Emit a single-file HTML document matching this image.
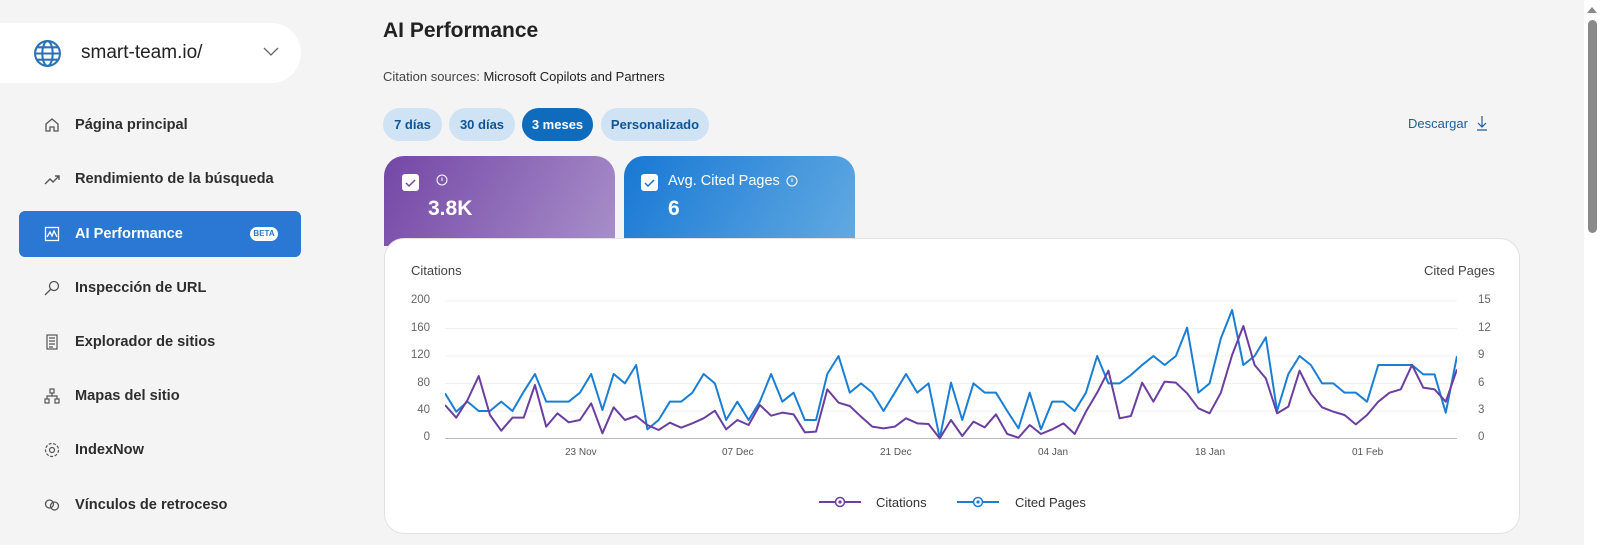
<!DOCTYPE html>
<html><head><meta charset="utf-8"><style>
*{margin:0;padding:0;box-sizing:border-box}
body{width:1600px;height:545px;background:#f4f4f4;font-family:"Liberation Sans",sans-serif;position:relative;overflow:hidden;color:#222}
.a{position:absolute}
.nav{position:absolute;left:0;width:301px;height:46px;display:flex;align-items:center;font-size:14.6px;font-weight:bold;color:#2e2e2e}
.nav svg{position:absolute;left:44px}
.nav span{position:absolute;left:75px}
.pill{position:absolute;top:108px;height:33px;border-radius:17px;background:#cfe3f4;color:#0f5596;font-size:13px;font-weight:bold;display:flex;align-items:center;justify-content:center}
.yl{position:absolute;font-size:11.5px;color:#666;width:24px;text-align:right}
.yr{position:absolute;font-size:11.5px;color:#666;left:1478px}
.xl{position:absolute;top:447px;font-size:10px;color:#555}
</style></head><body>
<div class="a" style="left:0;top:23px;width:301px;height:60px;background:#fff;border-radius:0 30px 30px 0"></div>
<svg class="a" style="left:33px;top:39px" width="29" height="29" viewBox="0 0 28 28" fill="none" stroke="#2a72b8" stroke-width="2"><circle cx="14" cy="14" r="12"/><ellipse cx="14" cy="14" rx="5" ry="12"/><path d="M2 14h24M4 8h20M4 20h20"/></svg>
<div class="a" style="left:81px;top:42px;font-size:19px;color:#222">smart-team.io/</div>
<svg class="a" style="left:263px;top:47px" width="16" height="10" viewBox="0 0 16 10" fill="none" stroke="#666" stroke-width="1.3"><path d="M1 1l7 7 7-7"/></svg>

<div class="nav" style="top:102px"><svg width="16" height="16" viewBox="0 0 16 16" fill="none" stroke="#555" stroke-width="1.3"><path d="M2 7l6-5 6 5v7H10v-4H6v4H2z"/></svg><span>Página principal</span></div>
<div class="nav" style="top:156px"><svg width="18" height="16" viewBox="0 0 18 16" fill="none" stroke="#555" stroke-width="1.4"><path d="M1 13l5-5 3 3 6-6M11 5h4v4"/></svg><span>Rendimiento de la búsqueda</span></div>
<div class="a" style="left:19px;top:211px;width:282px;height:46px;background:#2b78d4;border-radius:6px"></div>
<div class="nav" style="top:211px;color:#fff"><svg width="16" height="16" viewBox="0 0 16 16" fill="none" stroke="#fff" stroke-width="1.3"><rect x="1.5" y="1.5" width="13" height="13"/><path d="M3 11l3-5 2 4 2-5 3 6"/></svg><span>AI Performance</span></div>
<div class="a" style="left:250px;top:227px;width:28px;height:14px;background:#fff;border-radius:7px;font-size:8px;font-weight:bold;color:#2b78d4;text-align:center;line-height:14px">BETA</div>
<div class="nav" style="top:265px"><svg width="16" height="16" viewBox="0 0 16 16" fill="none" stroke="#555" stroke-width="1.3"><circle cx="10" cy="6" r="4.5"/><path d="M7 9l-6 6"/></svg><span>Inspección de URL</span></div>
<div class="nav" style="top:319px"><svg width="16" height="16" viewBox="0 0 16 16" fill="none" stroke="#555" stroke-width="1.2"><rect x="3" y="1" width="10" height="14"/><path d="M5 4h6M5 7h6M5 10h6M5 13h4"/></svg><span>Explorador de sitios</span></div>
<div class="nav" style="top:373px"><svg width="16" height="16" viewBox="0 0 16 16" fill="none" stroke="#555" stroke-width="1.2"><rect x="6" y="1" width="4" height="4"/><rect x="1" y="11" width="4" height="4"/><rect x="11" y="11" width="4" height="4"/><path d="M8 5v3M3 11V8h10v3"/></svg><span>Mapas del sitio</span></div>
<div class="nav" style="top:427px"><svg width="16" height="16" viewBox="0 0 16 16" fill="none" stroke="#555" stroke-width="1.2"><circle cx="8" cy="8" r="6.5" stroke-dasharray="3 1.5"/><circle cx="8" cy="8" r="2.5"/></svg><span>IndexNow</span></div>
<div class="nav" style="top:482px"><svg width="16" height="16" viewBox="0 0 16 16" fill="none" stroke="#555" stroke-width="1.3"><circle cx="5.5" cy="7" r="4"/><circle cx="10.5" cy="9" r="4"/></svg><span>Vínculos de retroceso</span></div>

<div class="a" style="left:383px;top:19px;font-size:21px;font-weight:bold;color:#222">AI Performance</div>
<div class="a" style="left:383px;top:69px;font-size:13px;color:#444">Citation sources: <span style="color:#222">Microsoft Copilots and Partners</span></div>
<div class="pill" style="left:383px;width:59px">7 días</div>
<div class="pill" style="left:449px;width:66px">30 días</div>
<div class="pill" style="left:522px;width:71px;background:#0f6cbd;color:#fff">3 meses</div>
<div class="pill" style="left:601px;width:108px">Personalizado</div>
<div class="a" style="left:1408px;top:116px;font-size:13px;color:#1c5e9e">Descargar</div>
<svg class="a" style="left:1476px;top:115px" width="12" height="16" viewBox="0 0 12 16" fill="none" stroke="#1c5e9e" stroke-width="1.2"><path d="M6 1v11M2 8l4 4 4-4M1 15h10"/></svg>

<div class="a" style="left:384px;top:156px;width:231px;height:90px;border-radius:20px 20px 0 0;background:linear-gradient(120deg,#7446a6,#a88fc9)"></div>
<div class="a" style="left:624px;top:156px;width:231px;height:90px;border-radius:20px 20px 0 0;background:linear-gradient(120deg,#1878d4,#62aae2)"></div>
<div class="a" style="left:402px;top:174px;width:17px;height:17px;background:#fff;border-radius:3px"><svg width="17" height="17"><path d="M4 9l3 3 6-6" fill="none" stroke="#6a4aa0" stroke-width="1.5"/></svg></div>
<div class="a" style="left:641px;top:174px;width:17px;height:17px;background:#fff;border-radius:3px"><svg width="17" height="17"><path d="M4 9l3 3 6-6" fill="none" stroke="#1a72c8" stroke-width="1.5"/></svg></div>
<svg class="a" style="left:436px;top:174px" width="12" height="12"><circle cx="6" cy="6" r="5" fill="none" stroke="#fff"/><path d="M6 3.5v3.5" stroke="#fff"/></svg>
<div class="a" style="left:428px;top:197px;font-size:21px;font-weight:bold;color:#fff">3.8K</div>
<div class="a" style="left:668px;top:173px;font-size:14.5px;color:#fff">Avg. Cited Pages</div>
<svg class="a" style="left:786px;top:175px" width="12" height="12"><circle cx="6" cy="6" r="5" fill="none" stroke="#fff"/><path d="M6 3.5v3.5" stroke="#fff"/></svg>
<div class="a" style="left:668px;top:197px;font-size:21px;font-weight:bold;color:#fff">6</div>

<div class="a" style="left:384px;top:238px;width:1136px;height:296px;background:#fff;border-radius:20px;border:1px solid #e2e2e2"></div>
<div class="a" style="left:411px;top:263px;font-size:13px;color:#444">Citations</div>
<div class="a" style="left:1424px;top:263px;font-size:13px;color:#444">Cited Pages</div>
<div class="yl" style="left:406px;top:294px">200</div>
<div class="yl" style="left:406px;top:322px">160</div>
<div class="yl" style="left:406px;top:349px">120</div>
<div class="yl" style="left:406px;top:377px">80</div>
<div class="yl" style="left:406px;top:404px">40</div>
<div class="yl" style="left:406px;top:431px">0</div>
<div class="yr" style="top:294px">15</div>
<div class="yr" style="top:322px">12</div>
<div class="yr" style="top:349px">9</div>
<div class="yr" style="top:377px">6</div>
<div class="yr" style="top:404px">3</div>
<div class="yr" style="top:431px">0</div>
<div class="xl" style="left:565px">23 Nov</div>
<div class="xl" style="left:722px">07 Dec</div>
<div class="xl" style="left:880px">21 Dec</div>
<div class="xl" style="left:1038px">04 Jan</div>
<div class="xl" style="left:1195px">18 Jan</div>
<div class="xl" style="left:1352px">01 Feb</div>
<svg class="a" style="left:445px;top:300px" width="1012" height="140"><g stroke="#f0f0f0"><path d="M0 1h1012M0 28.5h1012M0 56h1012M0 83.5h1012M0 111h1012"/></g><path d="M0 138.5h1012" stroke="#bbb"/></svg>
<svg class="a" style="left:445px;top:280px" width="1012" height="170" viewBox="0 0 90 510" preserveAspectRatio="none">
<polyline fill="none" stroke="#1a7fd4" stroke-width="2" vector-effect="non-scaling-stroke" stroke-linejoin="round" points="0,340 1,395 2,365 3,393 4,393 5,365 6,393 7,335 8,282 9,365 10,365 11,365 12,338 13,282 14,390 15,282 16,310 17,255 18,448 19,420 20,365 21,365 22,338 23,282 24,310 25,420 26,365 27,420 28,365 29,282 30,365 31,338 32,420 33,420 34,282 35,228 36,338 37,310 38,338 39,393 40,338 41,282 42,338 43,310 44,475 45,308 46,420 47,310 48,338 49,338 50,393 51,445 52,338 53,448 54,365 55,365 56,393 57,338 58,228 59,310 60,310 61,285 62,255 63,228 64,255 65,228 66,143 67,338 68,310 69,175 70,90 71,255 72,228 73,172 74,393 75,282 76,228 77,255 78,310 79,310 80,338 81,338 82,365 83,255 84,255 85,255 86,255 87,283 88,283 89,398 90,228"/>
<polyline fill="none" stroke="#6a3fa0" stroke-width="2" vector-effect="non-scaling-stroke" stroke-linejoin="round" points="0,375 1,413 2,360 3,288 4,405 5,452 6,413 7,413 8,315 9,440 10,400 11,427 12,420 13,370 14,460 15,382 16,420 17,408 18,435 19,450 20,428 21,443 22,430 23,415 24,392 25,448 26,420 27,435 28,375 29,407 30,398 31,403 32,457 33,455 34,328 35,368 36,378 37,410 38,440 39,445 40,440 41,415 42,430 43,432 44,475 45,420 46,468 47,425 48,442 49,403 50,462 51,473 52,435 53,462 54,448 55,430 56,462 57,395 58,338 59,272 60,415 61,408 62,308 63,365 64,305 65,308 66,340 67,385 68,400 69,338 70,225 71,138 72,255 73,295 74,400 75,380 76,272 77,340 78,382 79,395 80,405 81,433 82,405 83,365 84,338 85,328 86,255 87,323 88,328 89,365 90,268"/>
</svg>
<svg class="a" style="left:818px;top:495px" width="44" height="14"><path d="M1 7h42" stroke="#6a3fa0" stroke-width="2"/><circle cx="22" cy="7" r="4.5" fill="#fff" stroke="#6a3fa0" stroke-width="1.5"/><circle cx="22" cy="7" r="1.6" fill="#6a3fa0"/></svg>
<div class="a" style="left:876px;top:495px;font-size:13px;color:#333">Citations</div>
<svg class="a" style="left:956px;top:495px" width="44" height="14"><path d="M1 7h42" stroke="#1a7fd4" stroke-width="2"/><circle cx="22" cy="7" r="4.5" fill="#fff" stroke="#1a7fd4" stroke-width="1.5"/><circle cx="22" cy="7" r="1.6" fill="#1a7fd4"/></svg>
<div class="a" style="left:1015px;top:495px;font-size:13px;color:#333">Cited Pages</div>

<div class="a" style="left:1584px;top:0;width:16px;height:545px;background:#fff"></div>
<svg class="a" style="left:1587px;top:7px" width="10" height="6"><path d="M0 6L5 0L10 6z" fill="#888"/></svg>
<div class="a" style="left:1588px;top:20px;width:9px;height:213px;background:#8a8a8a;border-radius:5px"></div>
</body></html>
